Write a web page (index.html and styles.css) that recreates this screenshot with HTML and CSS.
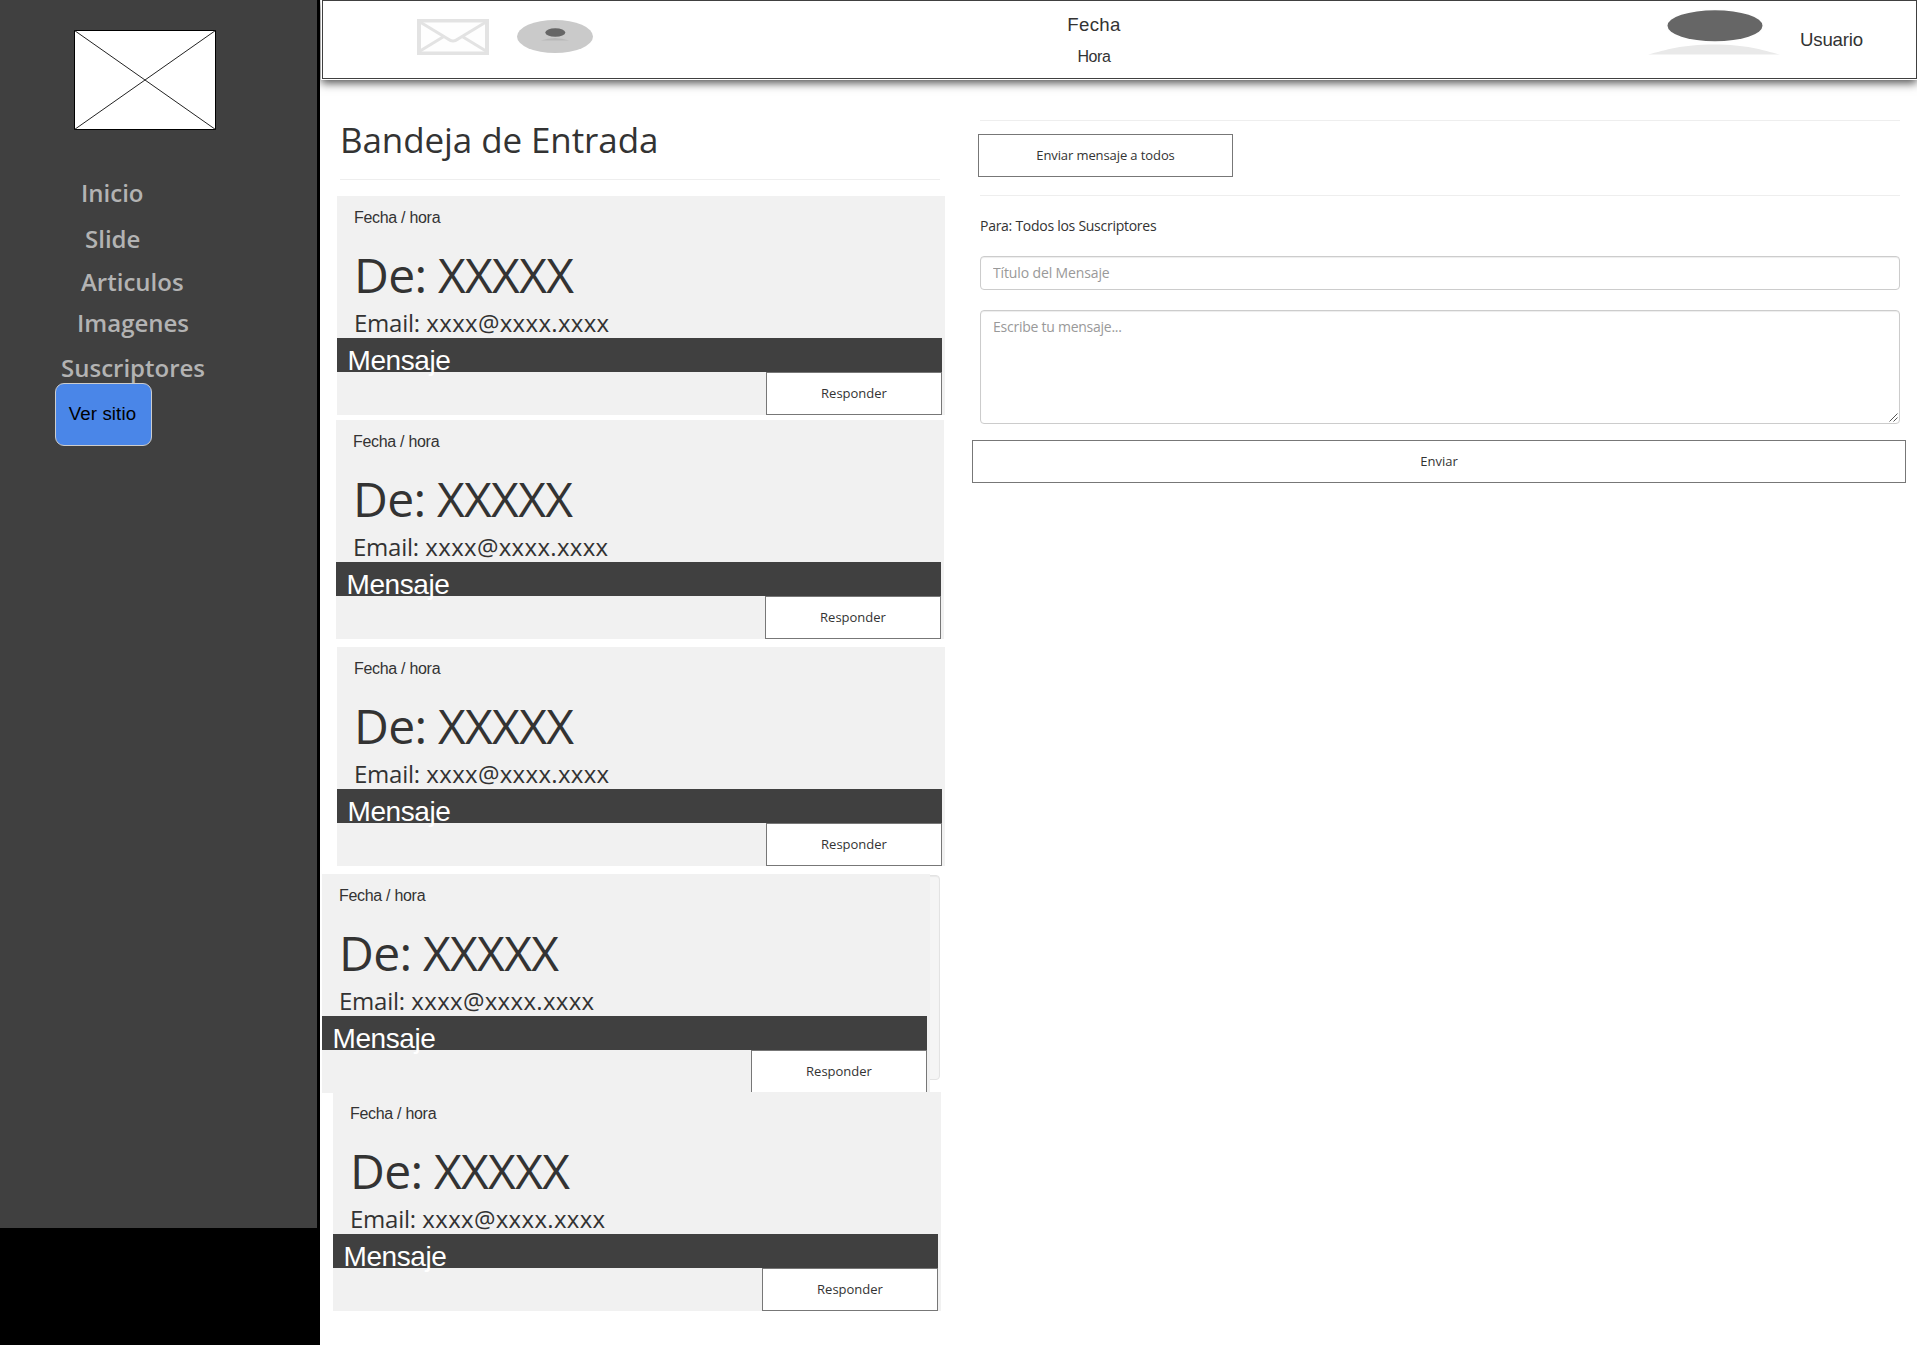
FILE: index.html
```html
<!DOCTYPE html>
<html lang="es">
<head>
<meta charset="utf-8">
<title>Bandeja de Entrada</title>
<link rel="stylesheet" href="styles.css">
</head>
<body>
<aside class="sidebar">
  <div class="sidebar-inner">
    <svg class="logo" width="142" height="100" viewBox="0 0 142 100">
      <rect x=".5" y=".5" width="141" height="99" fill="#fff" stroke="#000"/>
      <path d="M.5 .5L141.5 99.5M141.5 .5L.5 99.5" stroke="#222" fill="none"/>
    </svg>
    <nav class="menu">
      <a class="inicio">Inicio</a>
      <a class="slide">Slide</a>
      <a class="articulos">Articulos</a>
      <a class="imagenes">Imagenes</a>
      <a class="suscriptores">Suscriptores</a>
    </nav>
    <button class="site-button">Ver sitio</button>
  </div>
</aside>
<main class="main">
  <header class="header">
    <div class="header-box">
      <svg class="mail" width="72" height="36" viewBox="0 0 72 36">
        <rect x="2" y="1.5" width="68" height="33" fill="#fefefe" stroke="#e3e3e3" stroke-width="4"/>
        <path d="M3 3L31 20Q36 24 41 20L69 3M3 32L26 18M69 32L46 18" fill="none" stroke="#e3e3e3" stroke-width="3"/>
      </svg>
      <svg class="avatar" width="76" height="33" viewBox="0 0 76 33">
        <ellipse cx="38" cy="16.5" rx="38" ry="16.5" fill="#cacaca"/>
        <path d="M24 20.5Q38 15.500 52 20.500Z" fill="#b8b8b8"/>
        <ellipse cx="38.300" cy="12.500" rx="10" ry="4.300" fill="#666"/>
      </svg>
      <div class="clock"><span class="date">Fecha</span><span class="time">Hora</span></div>
      <svg class="user" width="132" height="46" viewBox="0 0 132 46">
        <path d="M0 45.500C18 41 34 35.500 66 35.500S114 41 132 45.500Z" fill="#e9e9e9"/>
        <ellipse cx="67" cy="16.800" rx="49" ry="17.500" fill="#fefefe"/>
        <ellipse cx="67" cy="16.800" rx="47.500" ry="15.500" fill="#666"/>
      </svg>
      <span class="username">Usuario</span>
    </div>
  </header>
  <div class="columns">
    <section class="inbox">
      <h1>Bandeja de Entrada</h1>
      <article class="card">
        <p class="when">Fecha / hora</p><h2>De: XXXXX</h2><p class="email"><span class="label">Email:</span> xxxx@xxxx.xxxx</p>
        <div class="message">Mensaje</div><button class="button reply">Responder</button>
      </article>
      <article class="card second">
        <p class="when">Fecha / hora</p><h2>De: XXXXX</h2><p class="email"><span class="label">Email:</span> xxxx@xxxx.xxxx</p>
        <div class="message">Mensaje</div><button class="button reply">Responder</button>
      </article>
      <article class="card third">
        <p class="when">Fecha / hora</p><h2>De: XXXXX</h2><p class="email"><span class="label">Email:</span> xxxx@xxxx.xxxx</p>
        <div class="message">Mensaje</div><button class="button reply">Responder</button>
      </article>
      <div class="well-row">
        <div class="well"></div>
        <article class="card fourth">
          <p class="when">Fecha / hora</p><h2>De: XXXXX</h2><p class="email"><span class="label">Email:</span> xxxx@xxxx.xxxx</p>
          <div class="message">Mensaje</div><button class="button reply">Responder</button>
        </article>
      </div>
      <article class="card fifth">
        <p class="when">Fecha / hora</p><h2>De: XXXXX</h2><p class="email"><span class="label">Email:</span> xxxx@xxxx.xxxx</p>
        <div class="message">Mensaje</div><button class="button reply">Responder</button>
      </article>
    </section>
    <section class="compose">
      <div class="send-all"><button class="button all">Enviar mensaje a todos</button></div>
      <p class="to">Para: Todos los Suscriptores</p>
      <input class="field subject" placeholder="Título del Mensaje">
      <div class="field body-field">
        <span>Escribe tu mensaje...</span>
        <svg class="grip" width="9" height="9" viewBox="0 0 9 9"><path d="M.5 8.500L8.500 .5M4.500 8.500L8.500 4.500" stroke="#555" fill="none"/></svg>
      </div>
      <button class="button send">Enviar</button>
    </section>
  </div>
</main>
</body>
</html>
```

FILE: styles.css
```css
* { box-sizing: border-box; }
body { margin: 0; display: flex; height: 1345px; overflow: hidden; background: #fff; color: #333; font-family: "Open Sans", sans-serif; }
h1, h2, p { margin: 0; font-weight: 400; white-space: nowrap; }
svg { display: block; flex: none; }
button { font: inherit; padding: 0; display: block; white-space: nowrap; }

.sidebar { width: 320px; flex: none; background: #000; }
.sidebar-inner { width: 317px; height: 1228px; padding-top: 30px; background: #404040; }
.logo { margin-left: 74px; }
.menu { display: flex; flex-direction: column; margin-top: 47px; font-size: 24px; line-height: 32px; font-weight: 600; color: #b3b3b3; }
.inicio { margin-left: 81px; }
.slide { margin: 14px 0 0 85px; }
.articulos { margin: 11px 0 0 81px; }
.imagenes { margin: 9px 0 0 77px; }
.suscriptores { margin: 13px 0 0 61px; }
.site-button { position: relative; width: 97px; height: 63px; margin: -1px 0 0 55px; padding: 0 2px 1px 0; border: 1px solid #ccc; border-radius: 9px; background: #4a86e8; color: #000; font: 18.67px "Liberation Sans", sans-serif; letter-spacing: .1px; }

.main { flex: 1; min-width: 0; }
.header { width: 1596px; height: 80px; margin-left: 1px; background: #fff; box-shadow: 0 3px 9px rgba(0, 0, 0, .7); clip-path: inset(0 0 -20px -1px); font-family: "Liberation Sans", sans-serif; }
.header-box { display: flex; width: 1595px; height: 79px; margin-left: 1px; border: 1px solid #404040; }
.mail { margin: 18px 0 0 94px; }
.avatar { margin: 19px 0 0 28px; }
.clock { display: flex; flex-direction: column; width: 80px; margin: 12px 0 0 461px; text-align: center; }
.date { font-size: 18.67px; line-height: 24px; letter-spacing: .3px; }
.time { font-size: 16px; line-height: 20px; margin-top: 10px; letter-spacing: -.4px; }
.user { margin: 8px 0 0 514px; }
.username { margin: 28px 0 0 20px; font-size: 18.67px; line-height: 22px; letter-spacing: -.2px; }

.columns { display: flex; }
.inbox { width: 625px; margin-left: 2px; }
h1 { height: 67px; width: 600px; margin: 33px 0 16px 18px; border-bottom: 1px solid #eee; font-size: 35px; line-height: 54px; letter-spacing: -.1px; }
.card { width: 608px; height: 219px; margin-left: 15px; padding-top: 13px; background: #f1f1f1; }
.second { margin: 5px 0 0 14px; }
.third { margin-top: 8px; }
.well-row { display: grid; margin-top: 8px; }
.well-row > * { grid-area: 1 / 1; }
.well { width: 618px; height: 205px; margin-top: 1px; border: 1px solid #e3e3e3; border-radius: 4px; background: #f5f5f5; box-shadow: inset 0 1px 1px rgba(0, 0, 0, .05); }
.fourth { margin-left: 0; }
.fifth { position: relative; margin: -1px 0 0 11px; }
.when { margin-left: 17px; font: 16px/18px "Liberation Sans", sans-serif; letter-spacing: -.3px; }
h2 { margin: 20px 0 0 17px; font-size: 48px; line-height: 56px; letter-spacing: -.7px; }
.email { margin: 5px 0 0 17px; font-size: 24px; line-height: 30px; letter-spacing: .32px; }
.label { letter-spacing: -.25px; }
.message { width: 605px; height: 34px; padding: 7px 0 0 10.5px; background: #404040; color: #fff; font: 28px/32px "Liberation Sans", sans-serif; letter-spacing: -.4px; }
.button { height: 43px; padding-bottom: 2px; border: 1px solid #777; background: #fff; color: #333; font-size: 13px; }
.reply { width: 176px; margin-left: 429px; position: relative; }

.compose { width: 920px; margin: 40px 0 0 33px; }
.send-all { height: 76px; padding-top: 13px; border: 1px solid #eee; border-width: 1px 0; }
.all { width: 255px; margin-left: -2px; letter-spacing: -.1px; }
.to { margin-top: 19px; font-size: 14px; line-height: 22px; letter-spacing: -.27px; }
.field { width: 920px; border: 1px solid #ccc; border-radius: 4px; padding: 6px 12px; background: #fff; color: #999; font: 14px/20px "Open Sans", sans-serif; letter-spacing: -.25px; box-shadow: inset 0 1px 1px rgba(0, 0, 0, .075); }
.field::placeholder { color: #999; }
.subject { display: block; height: 34px; margin-top: 19px; padding: 5px 12px 7px; letter-spacing: -.13px; }
.body-field { display: flex; justify-content: space-between; height: 114px; margin-top: 20px; padding-right: 1px; padding-bottom: 1px; }
.grip { align-self: flex-end; }
.send { width: 934px; margin: 16px 0 0 -8px; }
```
